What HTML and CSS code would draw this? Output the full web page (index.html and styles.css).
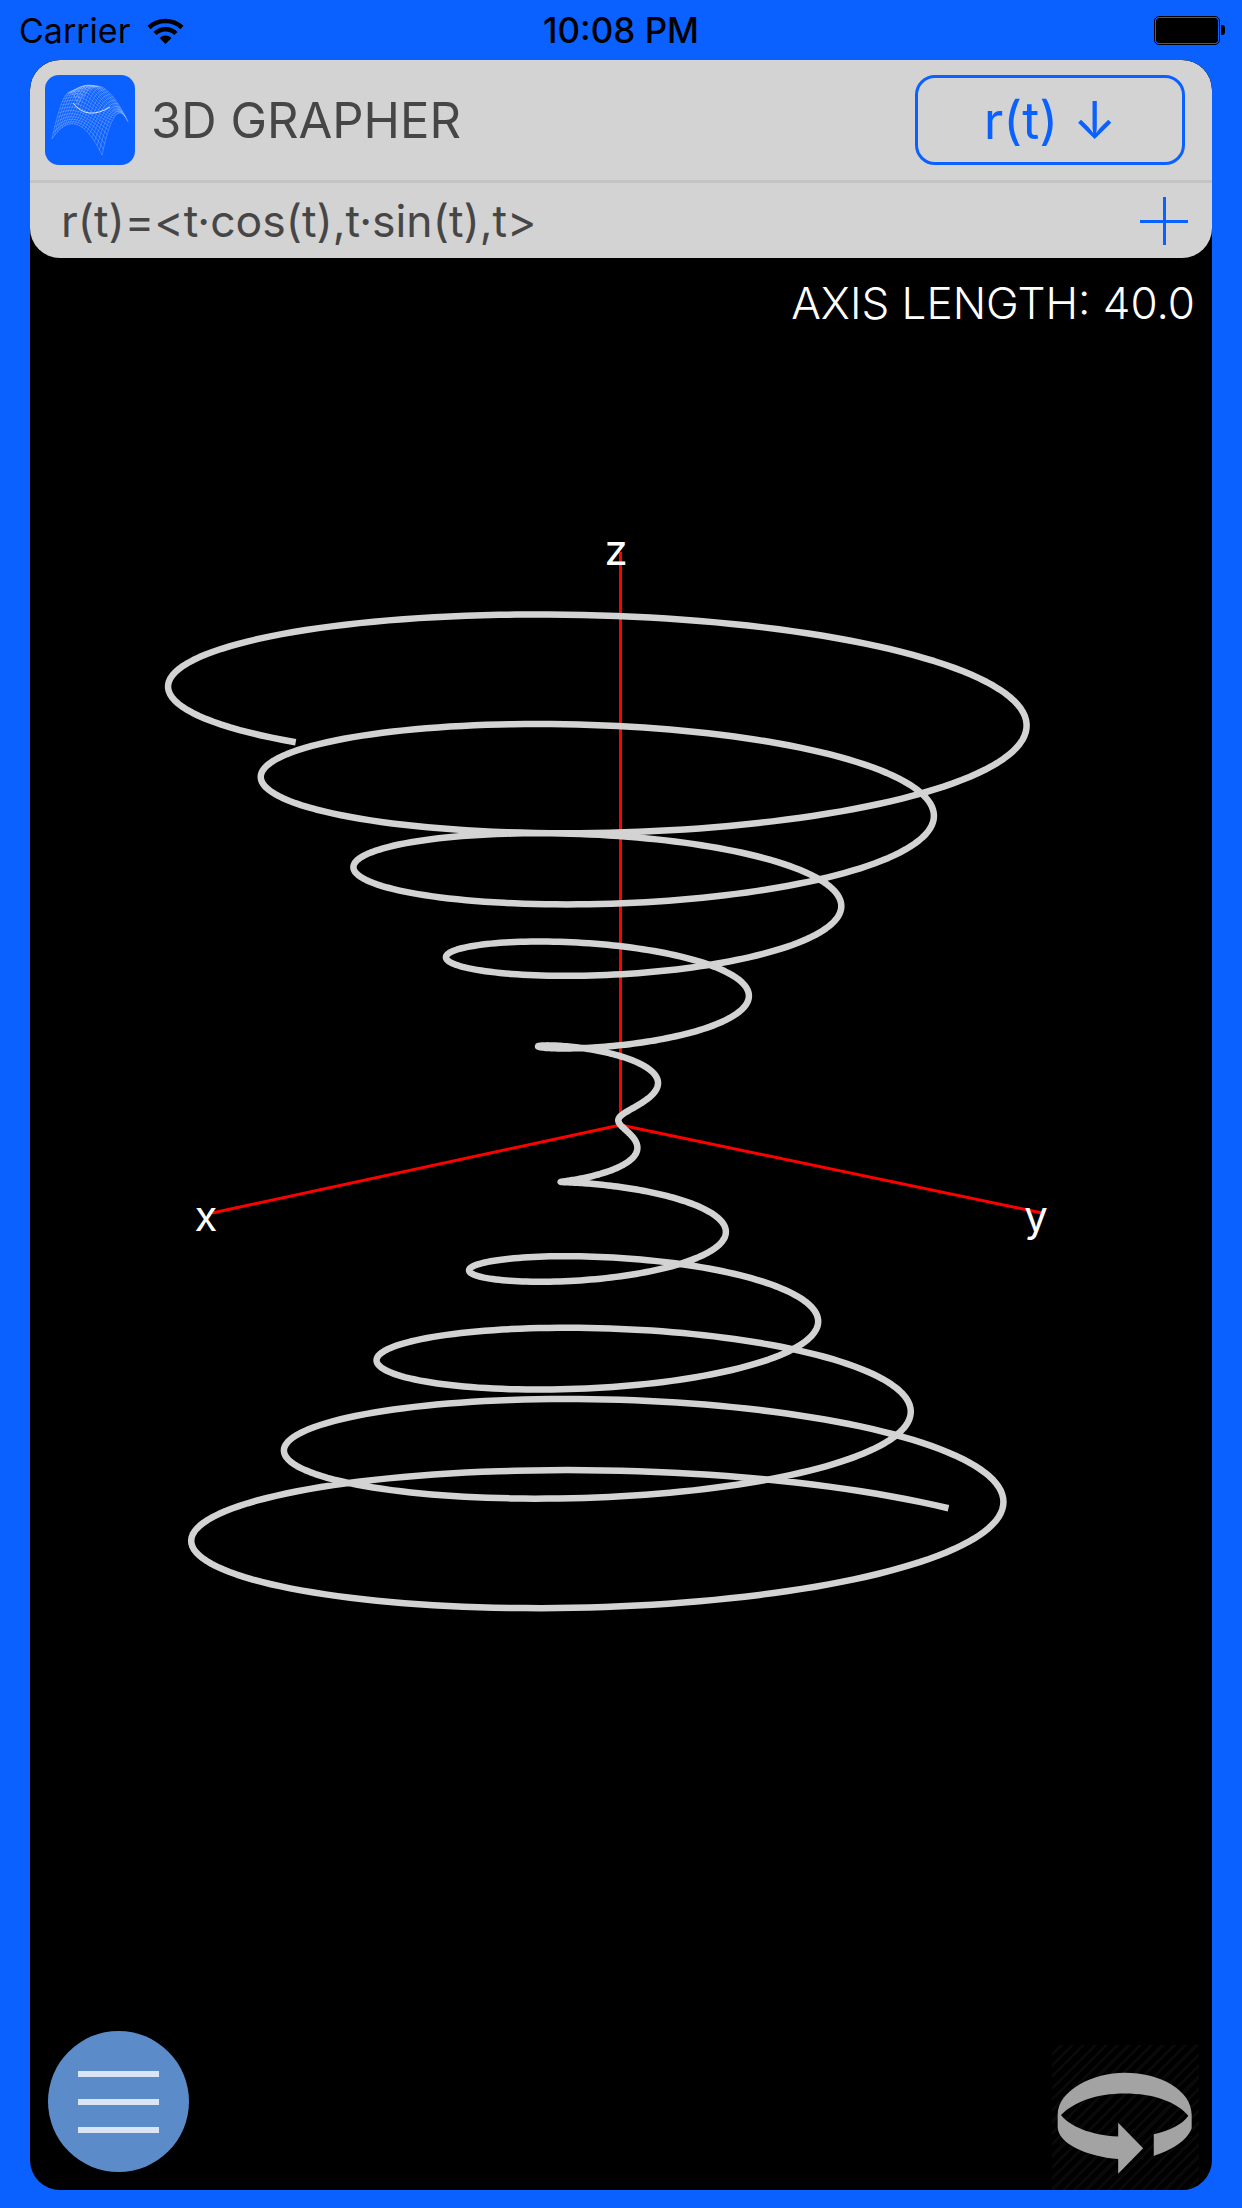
FILE: index.html
```html
<!DOCTYPE html>
<html lang="en">
<head>
    <meta charset="UTF-8">
    <meta name="viewport" content="width=device-width, initial-scale=1.0">
    <title>3D Grapher</title>
    <link rel="stylesheet" href="styles.css">
</head>
<body>
    <div class="status-bar">
        <div class="status-left">
            <span>Carrier</span>
            <svg class="wifi" viewBox="0 0 37 27">
                <path d="M2 10.500A24 24 0 0 1 35 10.500" fill="none" stroke="#000" stroke-width="4.500"/>
                <path d="M8 16.500A15 15 0 0 1 29 16.500" fill="none" stroke="#000" stroke-width="4.500"/>
                <path d="M18.500 27L12.500 21A8.500 8.500 0 0 1 24.500 21Z" fill="#000"/>
            </svg>
        </div>
        <div class="status-time">10:08 PM</div>
        <div class="battery">
            <div class="battery-body"></div>
            <div class="battery-nub"></div>
        </div>
    </div>

    <div class="panel">
        <div class="header">
            <div class="header-top">
                <div class="logo-title">
                    <svg class="logo" viewBox="0 0 90 90">
                        <path id="logo-mesh"/>
                        <path class="logo-fold" d="M28 28Q42 46 65 32"/>
                    </svg>
                    <h1>3D GRAPHER</h1>
                </div>
                <button class="type-button">r(t) <span class="arrow">↓</span></button>
            </div>
            <div class="header-bottom">
                <span class="equation">r(t)=&lt;t·cos(t),t·sin(t),t&gt;</span>
                <svg class="plus" viewBox="0 0 48 48">
                    <path d="M0 24.500H48M24.500 0V48" stroke="#0b61ff" stroke-width="3"/>
                </svg>
            </div>
        </div>

        <div class="axis-length">AXIS LENGTH: 40.0</div>

        <!-- viewBox uses page coordinates -->
        <svg class="graph" viewBox="30 60 1182 2130">
            <path class="axis" d="M620.500 1125L620.500 552"/>
            <path class="axis" d="M620.500 1125L212 1213"/>
            <path class="axis" d="M620.500 1125L1042 1213"/>
            <path id="curve" class="curve"/>
            <text class="axis-label" x="616" y="565">z</text>
            <text class="axis-label" x="206" y="1231">x</text>
            <text class="axis-label" x="1036" y="1231">y</text>
        </svg>

        <button class="menu-button">
            <span class="menu-line"></span>
            <span class="menu-line"></span>
            <span class="menu-line"></span>
        </button>

        <div class="rotate-button">
            <svg viewBox="155 135 442 435">
                <path fill="#a3a3a3" d="M172 345C172 270 280 218 373 218C480 218 575 270 575 345L575 385C560 425 510 452 461 468L461 403C510 392 548 372 565 347C530 305 460 280 373 280C290 280 220 305 182 345C210 380 270 405 354 410L354 368L429 445L354 522L354 477C260 470 172 430 172 380Z"/>
            </svg>
        </div>
    </div>

    <script src="script.js"></script>
</body>
</html>
```

FILE: styles.css
```css
body {
    font-family: Inter, "Liberation Sans", sans-serif;
    background-color: #0b61ff;
    margin: 0;
    height: 2208px;
    display: flex;
    flex-direction: column;
    overflow: hidden;
}

.status-bar {
    height: 60px;
    padding: 0 17px 0 19px;
    display: flex;
    align-items: center;
    justify-content: space-between;
    position: relative;
    color: #000;
    font-size: 34px;
    flex-shrink: 0;
}

.status-left {
    display: flex;
    align-items: center;
    gap: 17px;
}

.wifi {
    width: 37px;
    height: 27px;
}

.status-time {
    position: absolute;
    left: 0;
    right: 0;
    text-align: center;
    font-size: 35px;
    font-weight: 500;
}

.battery {
    display: flex;
    align-items: center;
}

.battery-body {
    width: 60px;
    height: 23px;
    background-color: #000;
    border: 1px solid #000;
    outline: 1px solid #000;
    outline-offset: 1px;
    border-radius: 3px;
}

.battery-nub {
    width: 4px;
    height: 10px;
    margin-left: 3px;
    background-color: #000;
    border-radius: 0 3px 3px 0;
}

.panel {
    flex: 1;
    margin: 0 30px 18px;
    background-color: #000;
    border-radius: 30px;
    position: relative;
    overflow: hidden;
}

.header {
    background-color: #d3d3d3;
    border-radius: 30px;
    color: #464646;
    position: relative;
    z-index: 1;
}

.header-top {
    height: 123px;
    padding: 15px 27px 15px 15px;
    box-sizing: border-box;
    display: flex;
    align-items: center;
    justify-content: space-between;
    border-bottom: 3px solid #c4c4c4;
}

.logo-title {
    display: flex;
    align-items: center;
    gap: 16px;
}

.logo {
    width: 90px;
    height: 90px;
    background-color: #0b61ff;
    border-radius: 14px;
}

#logo-mesh {
    fill: none;
    stroke: #fff;
    stroke-opacity: 0.45;
    stroke-width: 0.5;
}

.logo-fold {
    fill: none;
    stroke: #fff;
    stroke-opacity: 0.8;
    stroke-width: 1;
}

h1 {
    margin: 0;
    font-size: 49px;
    font-weight: 400;
}

.type-button {
    width: 270px;
    height: 90px;
    padding: 0;
    background: none;
    border: 3px solid #0b61ff;
    border-radius: 20px;
    color: #0b61ff;
    font-family: inherit;
    font-size: 52px;
    font-weight: 400;
    cursor: pointer;
}

.header-bottom {
    height: 75px;
    padding: 0 24px 0 31px;
    display: flex;
    align-items: center;
    justify-content: space-between;
}

.equation {
    font-size: 44.500px;
}

.plus {
    width: 48px;
    height: 48px;
}

.axis-length {
    padding: 18px 17px 0 0;
    text-align: right;
    color: #fff;
    font-size: 44px;
    font-weight: 300;
    line-height: 54px;
    position: relative;
    z-index: 1;
}

.graph {
    position: absolute;
    left: 0;
    top: 0;
    width: 1182px;
    height: 2130px;
}

.axis {
    fill: none;
    stroke: #ff0000;
    stroke-width: 3;
}

.curve {
    fill: none;
    stroke: #d3d3d3;
    stroke-width: 6.500;
    stroke-linejoin: round;
}

.axis-label {
    fill: #fff;
    font-size: 42px;
    text-anchor: middle;
}

.menu-button {
    position: absolute;
    left: 18px;
    bottom: 18px;
    width: 141px;
    height: 141px;
    padding: 0;
    border: none;
    border-radius: 50%;
    background-color: #5b8bc9;
    display: flex;
    flex-direction: column;
    align-items: center;
    justify-content: center;
    gap: 22px;
    cursor: pointer;
}

.menu-line {
    width: 81px;
    height: 6px;
    background-color: #d9e5f4;
}

.rotate-button {
    position: absolute;
    right: 13px;
    bottom: 0;
    width: 147px;
    height: 145px;
    background: repeating-linear-gradient(135deg, #000 0, #000 5px, #090909 5px, #090909 8px);
}

.rotate-button svg {
    display: block;
    width: 147px;
    height: 145px;
}
```

FILE: script.js
```js
// r(t)=<t cos t, t sin t, t>, same projection as the axes
const originX = 620.5;
const originY = 1125;
const startT = -10 * Math.PI;
const endT = 10 * Math.PI + 0.01;
const steps = 1600;

let curve = '';
for (let i = 0; i <= steps; i++) {
    const t = startT + (endT - startT) * i / steps;
    const x = t * Math.cos(t);
    const y = t * Math.sin(t);
    const px = originX + (y - x) * 10.44;
    const py = originY + (x + y) * 2.2 - t * 14.4;
    curve += (curve ? 'L' : 'M') + px.toFixed(2) + ' ' + py.toFixed(2);
}
document.getElementById('curve').setAttribute('d', curve);

// wire mesh in the logo
function meshPoint(x, y) {
    const bump = 14 * Math.exp(-((x + 0.3) ** 2 + (y + 0.3) ** 2) / 0.5);
    const h = 22 * (1 - x * x * y * y) + bump;
    const px = 45 + (y - x) * 19 + (x + y) * 6;
    const py = 55.5 + x * 16.5 + y * 8 - h;
    return px.toFixed(2) + ' ' + py.toFixed(2);
}

let mesh = '';
for (let i = -1; i <= 1.001; i += 0.1) {
    for (let j = -1; j <= 1.001; j += 0.05) {
        mesh += (j === -1 ? 'M' : 'L') + meshPoint(i, j);
    }
    for (let j = -1; j <= 1.001; j += 0.05) {
        mesh += (j === -1 ? 'M' : 'L') + meshPoint(j, i);
    }
}
document.getElementById('logo-mesh').setAttribute('d', mesh);
```
